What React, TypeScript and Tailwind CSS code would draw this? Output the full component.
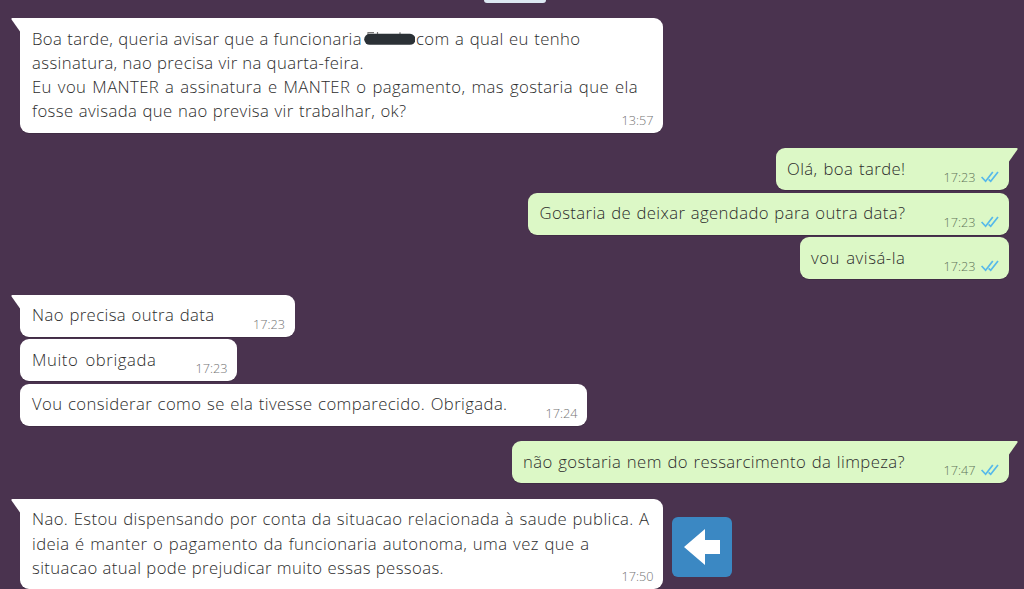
import React from 'react';
import clsx from 'clsx';

interface TextLine {
  text: string;
  width: string;
  redacted?: string;
}

interface Message {
  lines: TextLine[];
  time: string;
  sent?: boolean;
  tail?: boolean;
  box: string;
}

const messages: Message[] = [
  {
    lines: [
      { text: 'Boa tarde, queria avisar que a funcionaria', width: 'w-[330px]', redacted: 'com a qual eu tenho' },
      { text: 'assinatura, nao precisa vir na quarta-feira.', width: 'w-[332px]' },
      { text: 'Eu vou MANTER a assinatura e MANTER o pagamento, mas gostaria que ela', width: 'w-[606px]' },
      { text: 'fosse avisada que nao previsa vir trabalhar, ok?', width: 'w-[374.5px]' },
    ],
    time: '13:57',
    tail: true,
    box: 'w-[643px] h-[114.5px]',
  },
  { lines: [{ text: 'Olá, boa tarde!', width: 'w-[118.5px]' }], time: '17:23', sent: true, tail: true, box: 'w-[233.5px] h-[42px] mt-[15.5px]' },
  { lines: [{ text: 'Gostaria de deixar agendado para outra data?', width: 'w-[366px]' }], time: '17:23', sent: true, box: 'w-[481px] h-[42px] mt-[2.6px]' },
  { lines: [{ text: 'vou avisá-la', width: 'w-[94.5px] tracking-[0.55px]' }], time: '17:23', sent: true, box: 'w-[209.5px] h-[42px] mt-[2.6px]' },
  { lines: [{ text: 'Nao precisa outra data', width: 'w-[182.5px]' }], time: '17:23', tail: true, box: 'w-[274.5px] h-[42px] mt-[15.5px]' },
  { lines: [{ text: 'Muito obrigada', width: 'w-[124.5px] tracking-[0.6px]' }], time: '17:23', box: 'w-[217px] h-[42px] mt-[2.6px]' },
  { lines: [{ text: 'Vou considerar como se ela tivesse comparecido. Obrigada.', width: 'w-[475.5px]' }], time: '17:24', box: 'w-[567px] h-[42px] mt-[2.6px]' },
  { lines: [{ text: 'não gostaria nem do ressarcimento da limpeza?', width: 'w-[382px]' }], time: '17:47', sent: true, tail: true, box: 'w-[497.5px] h-[42px] mt-[15.5px]' },
  {
    lines: [
      { text: 'Nao. Estou dispensando por conta da situacao relacionada à saude publica. A', width: 'w-[617.5px]' },
      { text: 'ideia é manter o pagamento da funcionaria autonoma, uma vez que a', width: 'w-[557.5px]' },
      { text: 'situacao atual pode prejudicar muito essas pessoas.', width: 'w-[412px]' },
    ],
    time: '17:50',
    tail: true,
    box: 'w-[643px] h-[90px] mt-[15.5px]',
  },
];

// Marker stroke over the name, with the letter tops still peeking out
const Redaction: React.FC = () => (
  <svg className="-mt-px h-6 w-[53px] shrink-0" viewBox="0 0 53 24" fill="none">
    <path d="M6 10V6.6h6M15.5 9V6M38 8V6.3" stroke="#777" strokeWidth="1.2" />
    <path d="M7.7 13.3H48" stroke="#2b3136" strokeWidth="11" strokeLinecap="round" />
  </svg>
);

const Ticks: React.FC = () => (
  <svg className="h-[14px] w-5" viewBox="0 0 20 14" fill="none" stroke="#56b9ea" strokeWidth="1.7">
    <path d="M1.6 7 5.6 11.3 12.8 2" />
    <path d="M8.6 9.4 10.7 11.3 18 2" />
  </svg>
);

const Tail: React.FC<{ sent?: boolean }> = ({ sent }) => (
  <svg
    className={clsx('absolute top-0 h-[14px] w-[9px]', sent ? 'left-full -scale-x-100 text-[#dcf8c6]' : 'right-full text-white')}
    viewBox="0 0 9 14"
    fill="currentColor"
  >
    <path d="M9 0H1.4C.3 0 .1.8.7 1.7L9 13.5z" />
  </svg>
);

const Line: React.FC<{ line: TextLine }> = ({ line }) => (
  <div className="flex h-[24.2px] whitespace-nowrap">
    <span className={clsx('block shrink-0 whitespace-normal [text-align-last:justify]', line.width)}>{line.text}</span>
    {line.redacted && (
      <>
        <Redaction />
        <span className="block w-[165.5px] shrink-0 whitespace-normal pl-px [text-align-last:justify]">{line.redacted}</span>
      </>
    )}
  </div>
);

const Bubble: React.FC<{ message: Message }> = ({ message }) => {
  const { lines, time, sent, tail, box } = message;
  return (
    <div
      className={clsx(
        'relative shrink-0 rounded-[9px] pt-[8.6px] shadow-[0_1px_0.5px_rgba(0,0,0,0.13)]',
        sent ? 'bg-[#dcf8c6] pl-[11.5px]' : 'bg-white pl-3',
        tail && (sent ? 'rounded-tr-none' : 'rounded-tl-none'),
        box,
      )}
    >
      {tail && <Tail sent={sent} />}
      {lines.map((line) => (
        <Line key={line.text} line={line} />
      ))}
      <div
        className={clsx(
          'absolute right-[9.5px] bottom-[3px] flex items-center gap-1 text-[12.7px] leading-5 font-light tracking-normal',
          sent ? 'text-[#62755a]' : 'text-[#757575]',
        )}
      >
        {time}
        {sent && <Ticks />}
      </div>
    </div>
  );
};

const App: React.FC = () => (
  <div className="h-[589px] w-full overflow-hidden bg-[#4a334f] pr-[15px] pl-5 font-['Open_Sans',sans-serif] text-[16.7px] leading-[24.2px] font-light tracking-[0.4px] text-[#2c2c2c]">
    <div className="mb-[15.5px] ml-[464px] h-[2.5px] w-[62px] rounded-b-[6px] bg-[#dce8f2]" />
    {messages.map((message, index) => (
      <div key={message.lines[0].text} className={clsx('flex', message.sent && 'justify-end')}>
        <Bubble message={message} />
        {index === messages.length - 1 && (
          <div className="mt-[33.5px] ml-[9px] size-[60px] rounded-[6px] bg-[#3b88c3]">
            <svg className="size-full" viewBox="0 0 60 60" fill="white">
              <path d="M12 30 33 12V23H48V37H33V48z" />
            </svg>
          </div>
        )}
      </div>
    ))}
  </div>
);

export default App;
